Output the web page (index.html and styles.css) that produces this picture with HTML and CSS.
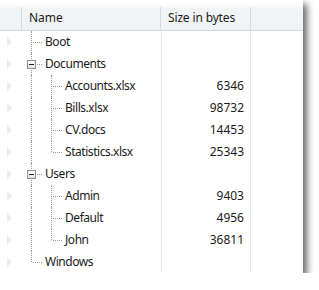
FILE: index.html
```html
<!DOCTYPE html>
<html lang="en">
<head>
<meta charset="UTF-8">
<title>tree list</title>
<link rel="stylesheet" href="styles.css">
</head>
<body>
<div class="tree">
  <div class="header">
    <div class="cell ind"></div>
    <div class="cell name">Name</div>
    <div class="cell size">Size in bytes</div>
    <div class="cell fill"></div>
  </div>

  <div class="row">
    <div class="cell ind"><span class="marker"></span></div>
    <div class="cell name"><span class="guide tee"></span><span class="label">Boot</span></div>
    <div class="cell size"></div>
    <div class="cell fill"></div>
  </div>
  <div class="row">
    <div class="cell ind"><span class="marker"></span></div>
    <div class="cell name"><span class="guide tee"><span class="expander"></span></span><span class="label">Documents</span></div>
    <div class="cell size"></div>
    <div class="cell fill"></div>
  </div>
  <div class="row">
    <div class="cell ind"><span class="marker"></span></div>
    <div class="cell name"><span class="guide pipe"></span><span class="guide tee"></span><span class="label">Accounts.xlsx</span></div>
    <div class="cell size">6346</div>
    <div class="cell fill"></div>
  </div>
  <div class="row">
    <div class="cell ind"><span class="marker"></span></div>
    <div class="cell name"><span class="guide pipe"></span><span class="guide tee"></span><span class="label">Bills.xlsx</span></div>
    <div class="cell size">98732</div>
    <div class="cell fill"></div>
  </div>
  <div class="row">
    <div class="cell ind"><span class="marker"></span></div>
    <div class="cell name"><span class="guide pipe"></span><span class="guide tee"></span><span class="label">CV.docs</span></div>
    <div class="cell size">14453</div>
    <div class="cell fill"></div>
  </div>
  <div class="row">
    <div class="cell ind"><span class="marker"></span></div>
    <div class="cell name"><span class="guide pipe"></span><span class="guide last"></span><span class="label">Statistics.xlsx</span></div>
    <div class="cell size">25343</div>
    <div class="cell fill"></div>
  </div>
  <div class="row">
    <div class="cell ind"><span class="marker"></span></div>
    <div class="cell name"><span class="guide tee"><span class="expander"></span></span><span class="label">Users</span></div>
    <div class="cell size"></div>
    <div class="cell fill"></div>
  </div>
  <div class="row">
    <div class="cell ind"><span class="marker"></span></div>
    <div class="cell name"><span class="guide pipe"></span><span class="guide tee"></span><span class="label">Admin</span></div>
    <div class="cell size">9403</div>
    <div class="cell fill"></div>
  </div>
  <div class="row">
    <div class="cell ind"><span class="marker"></span></div>
    <div class="cell name"><span class="guide pipe"></span><span class="guide tee"></span><span class="label">Default</span></div>
    <div class="cell size">4956</div>
    <div class="cell fill"></div>
  </div>
  <div class="row">
    <div class="cell ind"><span class="marker"></span></div>
    <div class="cell name"><span class="guide pipe"></span><span class="guide last"></span><span class="label">John</span></div>
    <div class="cell size">36811</div>
    <div class="cell fill"></div>
  </div>
  <div class="row">
    <div class="cell ind"><span class="marker"></span></div>
    <div class="cell name"><span class="guide last"></span><span class="label">Windows</span></div>
    <div class="cell size"></div>
    <div class="cell fill"></div>
  </div>
</div>
</body>
</html>
```
FILE: styles.css
```css
body {
    margin: 0;
    padding: 0;
    background-color: #fff;
    font-family: "Segoe UI", "Noto Sans", Arial, sans-serif;
    font-size: 12px;
    color: #1b1b1b;
  }

  .tree {
    width: 303px;
    height: 273px;
    overflow: hidden;
    background-color: #fff;
    box-shadow: 4px 4px 7px rgba(0, 0, 0, 0.6);
  }

  .header {
    display: flex;
    align-items: flex-end;
    height: 30px;
    border-bottom: 1px solid #d5d6d8;
    background: linear-gradient(#ffffff, #fafafb 6px, #f3f4f6 8px, #f1f2f4);
  }

  .header .cell {
    height: 23px;
    line-height: 22px;
    border-right: 1px solid #d9dadc;
    box-sizing: border-box;
  }

  .header .name,
  .header .size {
    padding-left: 7px;
    text-align: left;
  }

  .header .size {
    letter-spacing: -0.15px;
  }

  .header .fill {
    border-right: none;
  }

  .row {
    display: flex;
    height: 22px;
  }

  .row .cell {
    height: 22px;
    line-height: 22px;
    box-sizing: border-box;
  }

  .ind {
    width: 22px;
    flex: none;
  }

  .name {
    width: 139px;
    flex: none;
    display: flex;
  }

  .size {
    width: 90px;
    flex: none;
    text-align: right;
    padding-right: 6px;
  }

  .row .size {
    border-left: 1px solid #e8e8e8;
    border-right: 1px solid #e8e8e8;
  }

  .fill {
    flex: 1;
  }

  /* row indicator */
  .marker {
    display: block;
    width: 0;
    height: 0;
    margin: 6px 0 0 7px;
    border-top: 5px solid transparent;
    border-bottom: 5px solid transparent;
    border-left: 5px solid #ececec;
  }

  /* tree lines */
  .guide {
    position: relative;
    width: 20px;
    height: 22px;
    flex: none;
  }

  .guide::before {
    content: "";
    position: absolute;
    left: 9px;
    top: 0;
    bottom: 0;
    border-left: 1px dotted #9a9a9a;
  }

  .guide.last::before {
    bottom: 11px;
  }

  .guide.tee::after,
  .guide.last::after {
    content: "";
    position: absolute;
    left: 11px;
    width: 9px;
    top: 11px;
    border-top: 1px dotted #9a9a9a;
  }

  .expander {
    position: absolute;
    left: 5px;
    top: 7px;
    width: 7px;
    height: 7px;
    border: 1px solid #8e8f91;
    background: linear-gradient(#ffffff, #e4e4e4);
    z-index: 1;
  }

  .expander::after {
    content: "";
    position: absolute;
    left: 1px;
    right: 1px;
    top: 3px;
    border-top: 1px solid #222;
  }

  .label {
    padding-left: 3px;
    white-space: nowrap;
    letter-spacing: -0.45px;
  }
```
